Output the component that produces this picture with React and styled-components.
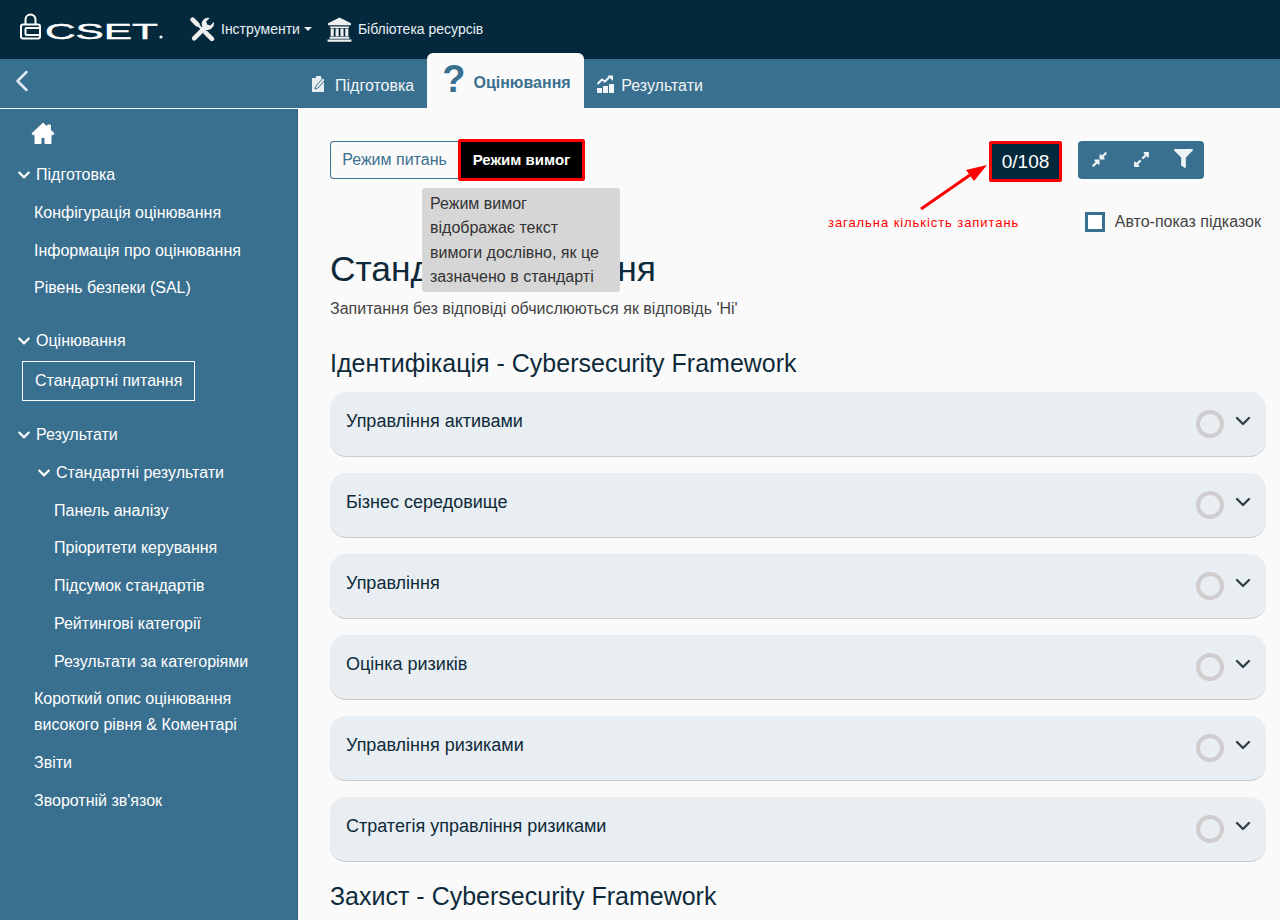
import React from "react";
import styled, { createGlobalStyle } from "styled-components";
import { FaCompressAlt, FaExpandAlt, FaFilter, FaChevronDown } from "react-icons/fa";
import { FiChevronLeft, FiChevronDown } from "react-icons/fi";

const NAVY = "#04293c";
const TEAL = "#3a708f";

const GlobalStyle = createGlobalStyle`
  html, body {
    margin: 0;
    padding: 0;
    height: 100%;
    overflow: hidden;
    background: #fafafa;
    font-family: "Liberation Sans", Arial, sans-serif;
  }
  * { box-sizing: border-box; }
`;

const Page = styled.div`
  height: 920px;
  display: flex;
  flex-direction: column;
  overflow: hidden;
`;

// верхня панель
const TopBar = styled.header`
  height: 59px;
  flex: none;
  background: ${NAVY};
  display: flex;
  align-items: center;
  padding-left: 20px;
  color: #fff;
`;
const Logo = styled.svg`
  width: 144px;
  height: 34px;
  margin: 1px 26px 0 0;
  overflow: visible;
`;
const TopLink = styled.div`
  display: flex;
  align-items: center;
  font-size: 14px;
  color: #e8f0f5;
  margin: -1px 15px 0 0;
`;
const TopIcon = styled.svg`
  width: 25px;
  height: 25px;
  margin-right: 6px;
  color: #efefef;
`;
const Caret = styled.span`
  width: 0;
  height: 0;
  margin-left: 4px;
  border-left: 4px solid transparent;
  border-right: 4px solid transparent;
  border-top: 4px solid #e8f0f5;
`;

const Body = styled.div`
  flex: 1;
  display: flex;
  min-height: 0;
`;

// бокове меню
const Sidebar = styled.aside`
  width: 298px;
  flex: none;
  background: ${TEAL};
  color: #fff;
  display: flex;
  flex-direction: column;
`;
const BackRow = styled.div`
  height: 50px;
  flex: none;
  border-bottom: 1px solid #fff;
  padding: 4px 0 0 4px;
  font-size: 36px;
  color: #dfe9ef;
  line-height: 0;
  svg { stroke-width: 1.7; }
`;
const NavList = styled.div`
  flex: 1;
  border-right: 1px solid #2f5f7c;
`;
const HomeRow = styled.div`
  height: 47px;
  padding: 13px 0 0 31px;
`;
const HomeIcon = styled.svg`
  display: block;
  width: 24px;
  height: 22px;
`;
const NavRow = styled.div`
  padding: 6.1px 8px 6.1px ${(p) => p.$indent}px;
  font-size: 16px;
  line-height: 25.6px;
  color: #fff;
  display: flex;
  align-items: center;
  margin-top: ${(p) => p.$gap || 0}px;
  svg { font-size: 14px; margin-right: 5px; flex: none; }
`;
const ActiveNav = styled.div`
  width: 173px;
  height: 40px;
  margin: 1px 0 15px 22px;
  border: 1px solid #fff;
  font-size: 16px;
  line-height: 38px;
  padding-left: 12px;
`;

const Right = styled.div`
  flex: 1;
  display: flex;
  flex-direction: column;
  min-width: 0;
`;

// вкладки
const Tabs = styled.nav`
  height: 49px;
  flex: none;
  background: ${TEAL};
  display: flex;
  align-items: flex-end;
  padding-left: 13px;
`;
const Tab = styled.div`
  height: 49px;
  display: flex;
  align-items: center;
  font-size: 16px;
  color: #f0f5f8;
  padding-top: 4px;
`;
const TabIcon = styled.svg`
  width: 17px;
  height: 18px;
  margin: -3px 7px 0 0;
`;
const ActiveTab = styled.div`
  width: 157px;
  height: 55px;
  margin: -6px 13px 0;
  background: #fafafa;
  border-radius: 6px 6px 0 0;
  display: flex;
  align-items: center;
  font-size: 16px;
  font-weight: bold;
  color: ${TEAL};
  padding: 4px 0 0 15px;
`;
const BigMark = styled.span`
  font-size: 38px;
  font-weight: bold;
  line-height: 1;
  margin: -8px 8px 0 0;
`;

const Content = styled.main`
  flex: 1;
  position: relative;
  padding: 33px 14px 0 32px;
  min-height: 0;
  overflow: hidden;
`;
const Toolbar = styled.div`
  display: flex;
  align-items: flex-start;
  height: 41px;
`;
const ModeOff = styled.div`
  width: 128px;
  height: 38px;
  border: 1px solid ${TEAL};
  border-right: none;
  border-radius: 4px 0 0 4px;
  color: ${TEAL};
  font-size: 16px;
  line-height: 36px;
  text-align: center;
`;
const ModeOn = styled.div`
  width: 127px;
  height: 42px;
  margin-top: -2px;
  background: #000;
  border: 3px solid #f00;
  border-radius: 2px;
  color: #fff;
  font-size: 15px;
  font-weight: bold;
  line-height: 36px;
  text-align: center;
`;
const Counter = styled.div`
  width: 73px;
  height: 41px;
  margin-left: auto;
  background: ${NAVY};
  border: 3px solid #f00;
  border-radius: 2px;
  color: #fff;
  font-size: 19px;
  line-height: 35px;
  text-align: center;
`;
const IconGroup = styled.div`
  width: 126px;
  height: 38px;
  margin: 0 62px 0 16px;
  background: ${TEAL};
  border-radius: 4px;
  color: #eef3f6;
  display: grid;
  grid-template-columns: repeat(3, 42px);
  justify-items: center;
  font-size: 17px;
  padding-top: 10px;
  svg:last-child { font-size: 19px; margin-top: -2px; }
`;
const Tooltip = styled.div`
  position: absolute;
  left: 124px;
  top: 80px;
  width: 198px;
  height: 104px;
  padding: 4px 8px;
  background: #d6d6d6;
  border-radius: 3px;
  color: #333;
  font-size: 16px;
  line-height: 24.3px;
`;
const Arrow = styled.svg`
  position: absolute;
  left: 620px;
  top: 54px;
  width: 75px;
  height: 50px;
`;
const Annotation = styled.div`
  position: absolute;
  left: 530px;
  top: 107px;
  color: #f00;
  font-size: 13px;
  letter-spacing: 0.93px;
  line-height: 16px;
  white-space: nowrap;
`;
const AutoRow = styled.label`
  display: flex;
  justify-content: flex-end;
  align-items: center;
  height: 20px;
  margin-top: 30px;
  color: #444;
  font-size: 16px;
  padding-right: 5px;
`;
const CheckBox = styled.span`
  width: 20px;
  height: 20px;
  margin-right: 10px;
  border: 3px solid ${TEAL};
  background: #fff;
`;
const Heading = styled.h1`
  margin: 16px 0 0;
  font-size: 35.4px;
  font-weight: normal;
  line-height: 42px;
  color: #0e2a3a;
`;
const Note = styled.p`
  margin: 7px 0 0;
  font-size: 16px;
  line-height: 24px;
  color: #444;
`;
const SectionTitle = styled.h2`
  margin: ${(p) => p.$top}px 0 14px;
  font-size: 25px;
  font-weight: normal;
  line-height: 29px;
  color: #0e2a3a;
`;
const Card = styled.div`
  height: 65px;
  margin-bottom: 16px;
  background: #e8eef1;
  border-radius: 16px;
  border-bottom: 1px solid #ccc;
  display: flex;
  padding: 0 11px 0 16px;
  color: #0e2a3a;
  font-size: 18px;
`;
const CardTitle = styled.span`
  flex: 1;
  padding-top: 17px;
  line-height: 24px;
`;
const Ring = styled.span`
  width: 28px;
  height: 28px;
  margin-top: 18px;
  border: 4px solid #cfcdcd;
  border-radius: 50%;
`;
const CardChevron = styled(FiChevronDown)`
  font-size: 24px;
  margin: 17px 0 0 7px;
  stroke-width: 2.4;
  color: #33414a;
`;

const cards = ["Управління активами", "Бізнес середовище", "Управління", "Оцінка ризиків", "Управління ризиками", "Стратегія управління ризиками"];

const App = () => {
  return (
    <Page>
      <GlobalStyle />
      <TopBar>
        <Logo viewBox="0 0 144 34">
          <path d="M5.5 11V6.5a5 5 0 0 1 10 0V11" fill="none" stroke="#fff" strokeWidth="2" />
          <rect x="1" y="11.5" width="19" height="14" rx="2" fill="none" stroke="#fff" strokeWidth="2" />
          <path d="M20 15H6.5a1 1 0 0 0-1 1v5a1 1 0 0 0 1 1H20" fill="none" stroke="#fff" strokeWidth="2" />
          <text x="25" y="26" fontFamily="Liberation Sans" fontSize="22" fill="#fff" stroke="#fff" strokeWidth="0.4" textLength="113" lengthAdjust="spacingAndGlyphs">CSET</text>
          <circle cx="141" cy="24" r="1.6" fill="#fff" />
        </Logo>
        <TopLink>
          <TopIcon viewBox="0 0 24 24">
            <path d="M4 4L20.5 20.5" stroke="currentColor" strokeWidth="2.2" />
            <path d="M2.5 2.5L7 7M15 15L21 21" stroke="currentColor" strokeWidth="4.4" strokeLinecap="round" />
            <path d="M4 20.5L15 9.5" stroke="currentColor" strokeWidth="4.4" strokeLinecap="round" />
            <path d="M22.8 4.8l-3.3 3.3-3-.9-.9-3 3.3-3.3a6 6 0 0 0-7.2 8l3 3a6 6 0 0 0 8.1-7.1z" fill="currentColor" />
          </TopIcon>
          Інструменти
          <Caret />
        </TopLink>
        <TopLink>
          <TopIcon viewBox="0 0 24 24">
            <path d="M12 0.5L23 6v2H1V6z" fill="currentColor" />
            <path d="M3 9h18v1.5H3zM3.5 11h3v7.5h-3zM8.2 11h3v7.5h-3zM12.9 11h3v7.5h-3zM17.5 11h3v7.5h-3zM2.5 19h19v1.8h-19zM0.5 21.5h23v2.2h-23z" fill="currentColor" />
          </TopIcon>
          Бібліотека ресурсів
        </TopLink>
      </TopBar>
      <Body>
        <Sidebar>
          <BackRow><FiChevronLeft /></BackRow>
          <NavList>
            <HomeRow>
              <HomeIcon viewBox="0 0 24 22">
                <path d="M12 1L1 11.5 2.4 13 4 11.8V21.5h6v-6h4v6h6V11.8L21.6 13 23 11.5 19.5 8V3h-3v2.2z" fill="#fff" stroke="#fff" strokeLinejoin="round" />
              </HomeIcon>
            </HomeRow>
            <NavRow $indent={17}><FaChevronDown />Підготовка</NavRow>
            <NavRow $indent={34}>Конфігурація оцінювання</NavRow>
            <NavRow $indent={34}>Інформація про оцінювання</NavRow>
            <NavRow $indent={34}>Рівень безпеки (SAL)</NavRow>
            <NavRow $indent={17} $gap={15}><FaChevronDown />Оцінювання</NavRow>
            <ActiveNav>Стандартні питання</ActiveNav>
            <NavRow $indent={17}><FaChevronDown />Результати</NavRow>
            <NavRow $indent={37}><FaChevronDown />Стандартні результати</NavRow>
            <NavRow $indent={54}>Панель аналізу</NavRow>
            <NavRow $indent={54}>Пріоритети керування</NavRow>
            <NavRow $indent={54}>Підсумок стандартів</NavRow>
            <NavRow $indent={54}>Рейтингові категорії</NavRow>
            <NavRow $indent={54}>Результати за категоріями</NavRow>
            <NavRow $indent={34}>Короткий опис оцінювання<br />високого рівня &amp; Коментарі</NavRow>
            <NavRow $indent={34}>Звіти</NavRow>
            <NavRow $indent={34}>Зворотній зв'язок</NavRow>
          </NavList>
        </Sidebar>
        <Right>
          <Tabs>
            <Tab>
              <TabIcon viewBox="0 0 17 18">
                <path d="M1 3h4V1h5v2h3v14H1z" fill="#e6eef2" />
                <path d="M4 14l1-3 7-8 2 2-7 8z" fill="#e6eef2" stroke={TEAL} strokeWidth="1" />
              </TabIcon>
              Підготовка
            </Tab>
            <ActiveTab><BigMark>?</BigMark>Оцінювання</ActiveTab>
            <Tab>
              <TabIcon viewBox="0 0 17 18">
                <path d="M0 13h5v5H0zM6 11h5v7H6zM12 9h5v9h-5z" fill="#f0f5f8" />
                <path d="M0.5 9L5 4.5l3 2L12.5 2" fill="none" stroke="#f0f5f8" strokeWidth="2" />
                <path d="M10.5 0.5H16V6z" fill="#f0f5f8" />
              </TabIcon>
              Результати
            </Tab>
          </Tabs>
          <Content>
            <Toolbar>
              <ModeOff>Режим питань</ModeOff>
              <ModeOn>Режим вимог</ModeOn>
              <Counter>0/108</Counter>
              <IconGroup>
                <FaCompressAlt />
                <FaExpandAlt />
                <FaFilter />
              </IconGroup>
            </Toolbar>
            <Tooltip>Режим вимог відображає текст вимоги дослівно, як це зазначено в стандарті</Tooltip>
            <Arrow viewBox="0 0 75 50">
              <path d="M3 47L52 13" stroke="#f00" strokeWidth="3" />
              <path d="M69 3L48 8L56 19Z" fill="#f00" />
            </Arrow>
            <Annotation>загальна кількість запитань</Annotation>
            <AutoRow><CheckBox />Авто-показ підказок</AutoRow>
            <Heading>Стандартні питання</Heading>
            <Note>Запитання без відповіді обчислюються як відповідь 'Ні'</Note>
            <SectionTitle $top={28}>Ідентифікація - Cybersecurity Framework</SectionTitle>
            {cards.map((c) => (
              <Card key={c}>
                <CardTitle>{c}</CardTitle>
                <Ring />
                <CardChevron />
              </Card>
            ))}
            <SectionTitle $top={20}>Захист - Cybersecurity Framework</SectionTitle>
          </Content>
        </Right>
      </Body>
    </Page>
  );
};

export default App;
